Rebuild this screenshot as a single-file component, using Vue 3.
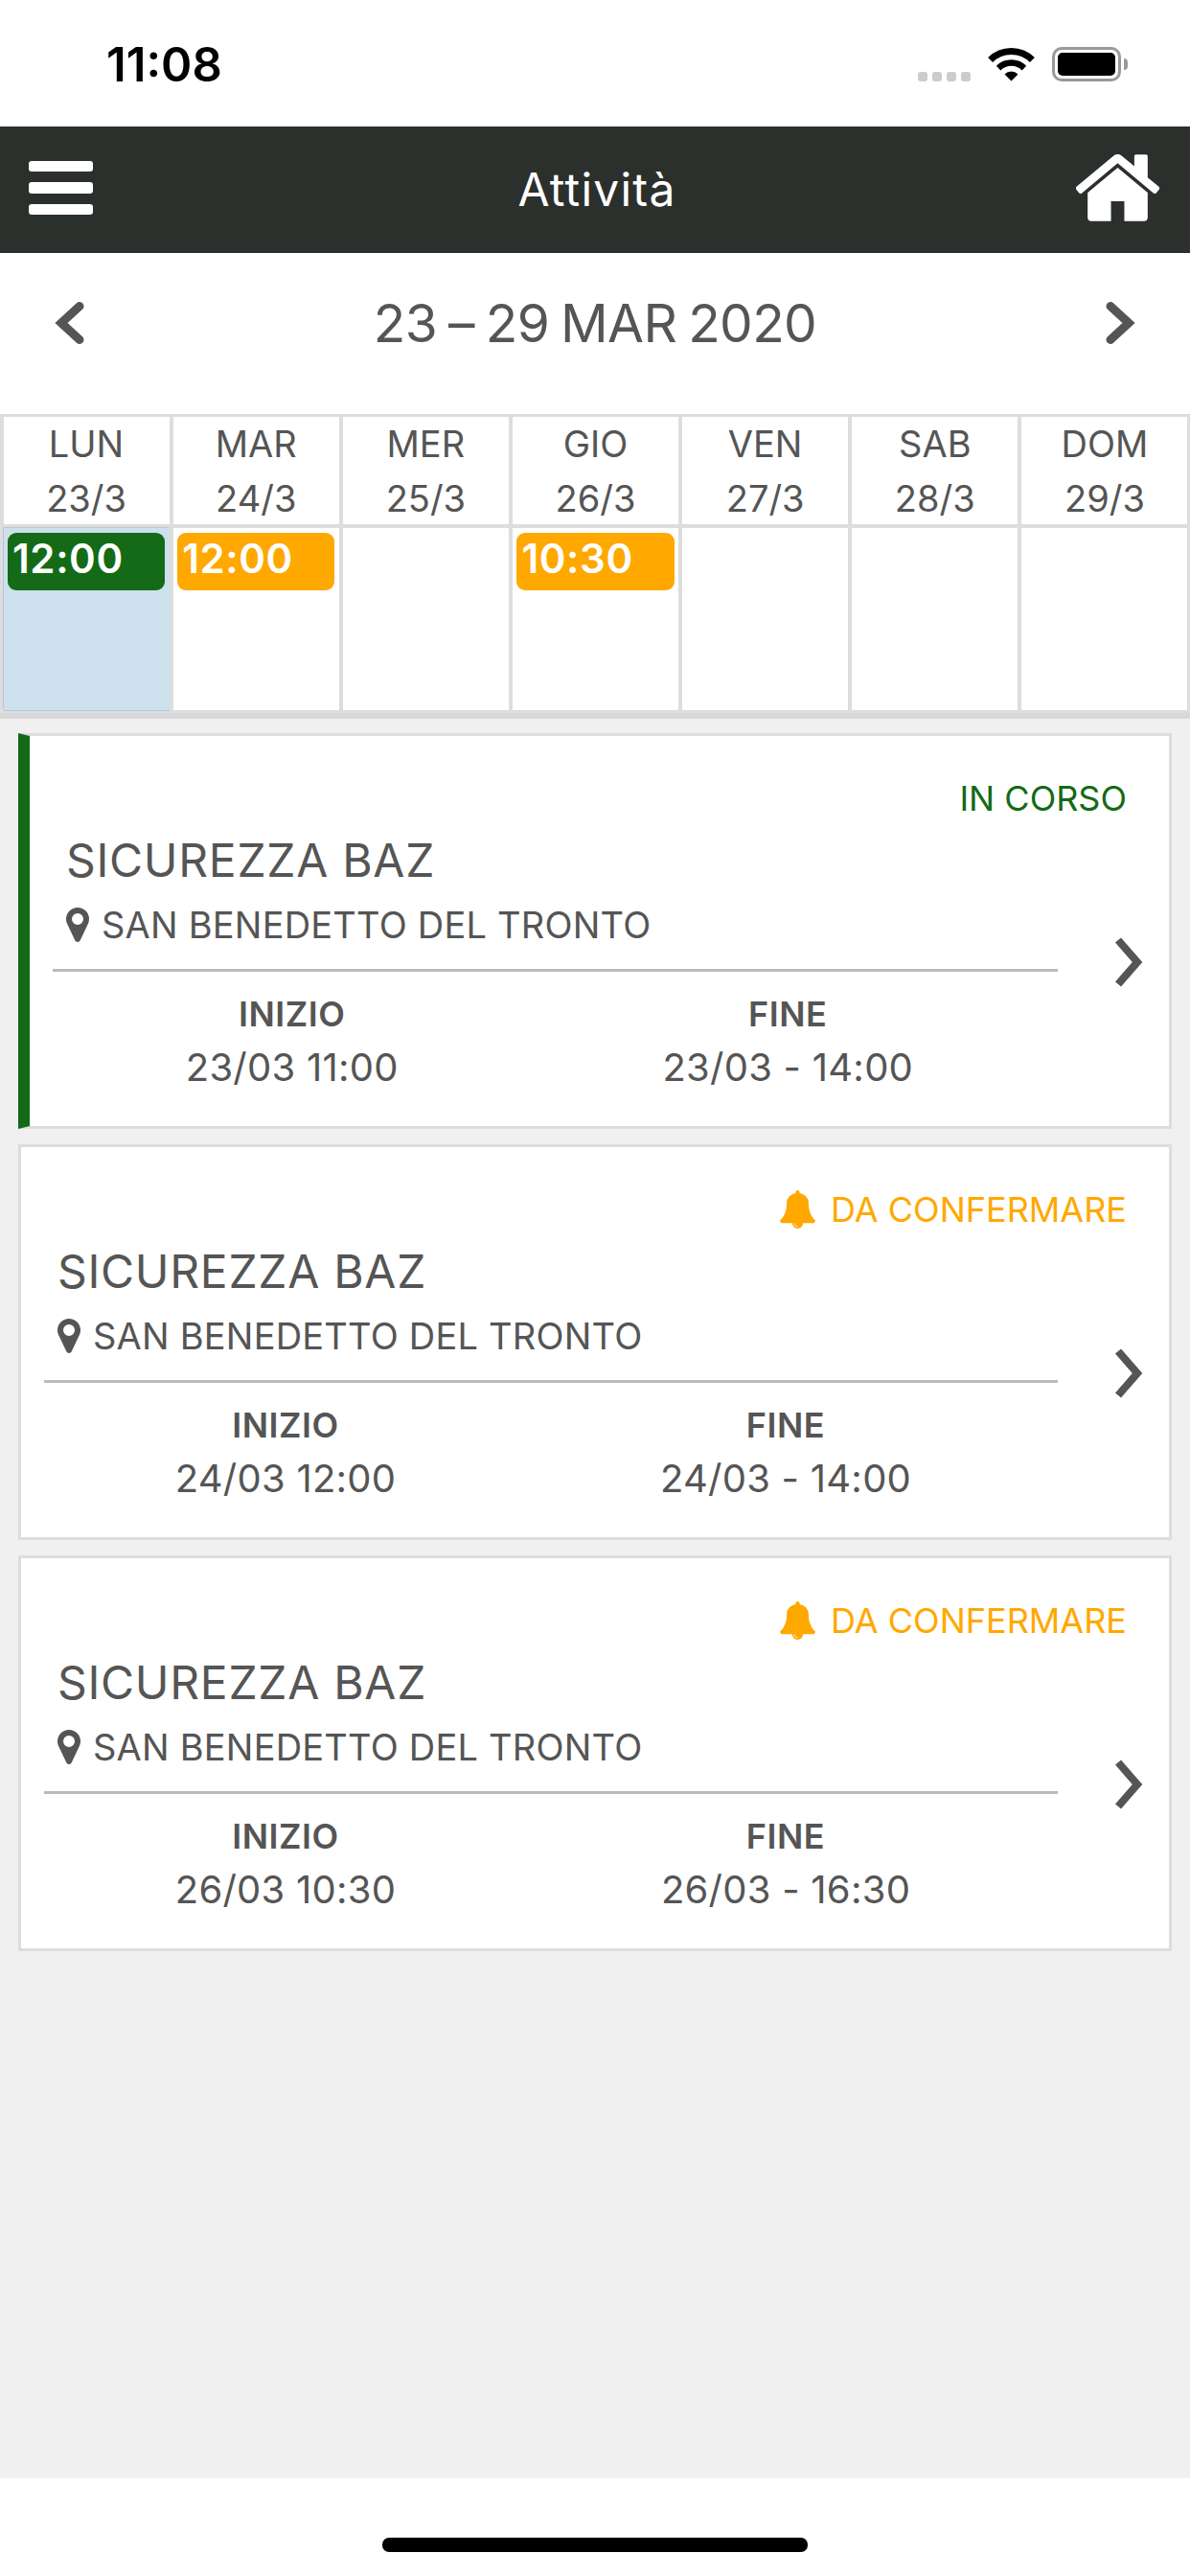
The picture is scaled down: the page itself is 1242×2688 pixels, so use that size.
<script setup>
const days = [
  { name: 'LUN', date: '23/3', time: '12:00', kind: 'active', today: true },
  { name: 'MAR', date: '24/3', time: '12:00', kind: 'pending' },
  { name: 'MER', date: '25/3' },
  { name: 'GIO', date: '26/3', time: '10:30', kind: 'pending' },
  { name: 'VEN', date: '27/3' },
  { name: 'SAB', date: '28/3' },
  { name: 'DOM', date: '29/3' }
];

const cards = [
  { status: 'IN CORSO', active: true, start: '23/03 11:00', end: '23/03 - 14:00' },
  { status: 'DA CONFERMARE', active: false, start: '24/03 12:00', end: '24/03 - 14:00' },
  { status: 'DA CONFERMARE', active: false, start: '26/03 10:30', end: '26/03 - 16:30' }
];
</script>

<template>
  <div class="screen">
    <div class="statusbar">
      <span class="clock">11:08</span>
      <div class="indicators">
        <div class="signal"><i></i><i></i><i></i><i></i></div>
        <svg class="wifi" viewBox="0 0 47 36" width="47" height="36">
          <path d="M1.6 13.6A31 31 0 0 1 45.4 13.6" fill="none" stroke="#000" stroke-width="7" />
          <path d="M10.1 22.1A19 19 0 0 1 36.9 22.1" fill="none" stroke="#000" stroke-width="6.5" />
          <path d="M23.5 35.5L16.5 28.4A10 10 0 0 1 30.5 28.4Z" fill="#000" />
        </svg>
        <div class="battery">
          <div class="battery-body"><div class="battery-level"></div></div>
          <div class="battery-cap"></div>
        </div>
      </div>
    </div>

    <header class="navbar">
      <div class="burger"><i></i><i></i><i></i></div>
      <h1 class="nav-title">Attività</h1>
      <svg class="home" viewBox="96 256 1600 1280" width="87" height="70">
        <path fill="#fff" d="M1472 992v480q0 26-19 45t-45 19h-384v-384h-256v384h-384q-26 0-45-19t-19-45v-480q0-1 .5-3t.5-3l575-474 575 474q1 2 1 6zm223-69l-62 74q-8 9-21 11h-3q-13 0-21-7l-692-577-692 577q-12 8-24 7-13-2-21-11l-62-74q-8-10-7-23.5t11-21.5l719-599q32-26 76-26t76 26l244 204v-195q0-14 9-23t23-9h192q14 0 23 9t9 23v408l219 182q10 8 11 21.5t-7 23.5z" />
      </svg>
    </header>

    <div class="week-nav">
      <svg viewBox="0 0 32 44" width="32" height="44">
        <polyline points="26,4.5 7,22 26,39.5" fill="none" stroke="#555" stroke-width="9" stroke-linecap="round" />
      </svg>
      <span class="week-label">23 – 29 MAR 2020</span>
      <svg viewBox="0 0 32 44" width="32" height="44">
        <polyline points="6,4.5 25,22 6,39.5" fill="none" stroke="#555" stroke-width="9" stroke-linecap="round" />
      </svg>
    </div>

    <div class="calendar">
      <div v-for="day in days" :key="day.name" class="day-head">
        <span>{{ day.name }}</span>
        <span>{{ day.date }}</span>
      </div>
      <div v-for="day in days" :key="day.date" class="day-cell" :class="{ today: day.today }">
        <div v-if="day.time" class="pill" :class="day.kind">{{ day.time }}</div>
      </div>
    </div>

    <main class="list">
      <article v-for="card in cards" :key="card.start" class="card" :class="{ 'card-active': card.active }">
        <div class="status" :class="card.active ? 'status-active' : 'status-pending'">
          <svg v-if="!card.active" class="bell" viewBox="64 0 1664 1792" width="37" height="40">
            <path fill="#ffa800" d="M912 1696q0-16-16-16-59 0-101.500-42.500t-42.500-101.500q0-16-16-16t-16 16q0 73 51.500 124.500t124.500 51.500q16 0 16-16zm816-288q0 52-38 90t-90 38h-448q0 106-75 181t-181 75-181-75-75-181h-448q-52 0-90-38t-38-90q50-42 91-88t85-119.500 74.500-158.500 50-206 19.500-260q0-152 117-282.500t307-158.500q-8-19-8-39 0-40 28-68t68-28 68 28 28 68q0 20-8 39 190 28 307 158.500t117 282.500q0 139 19.500 260t50 206 74.500 158.500 85 119.500 91 88z" />
          </svg>
          <span>{{ card.status }}</span>
        </div>
        <div class="card-body">
          <div class="card-main">
            <div class="card-head">
              <div class="card-title">SICUREZZA BAZ</div>
              <div class="card-place">
                <svg viewBox="384 128 1024 1536" width="24" height="36">
                  <path fill="#555" d="M1152 640q0-106-75-181t-181-75-181 75-75 181 75 181 181 75 181-75 75-181zm256 0q0 109-33 179l-364 774q-16 33-47.500 52t-67.500 19-67.500-19-47-52l-365-774q-33-70-33-179 0-212 150-362t362-150 362 150 150 362z" />
                </svg>
                <span>SAN BENEDETTO DEL TRONTO</span>
              </div>
            </div>
            <div class="divider"></div>
            <div class="times">
              <div class="time-col">
                <div class="time-label">INIZIO</div>
                <div class="time-value">{{ card.start }}</div>
              </div>
              <div class="time-col">
                <div class="time-label">FINE</div>
                <div class="time-value">{{ card.end }}</div>
              </div>
            </div>
          </div>
          <svg class="card-arrow" viewBox="0 0 30 52" width="30" height="52">
            <polyline points="4,3 24,26 4,49" fill="none" stroke="#555" stroke-width="8" />
          </svg>
        </div>
      </article>
    </main>

    <footer class="home-area"><div class="home-bar"></div></footer>
  </div>
</template>

<style scoped>
.screen {
  width: 1242px;
  height: 2688px;
  display: flex;
  flex-direction: column;
  background: #fff;
  color: #555;
  font-family: Inter, "Liberation Sans", sans-serif;
}

.statusbar {
  height: 132px;
  box-sizing: border-box;
  padding: 49px 65px 0 111px;
  display: flex;
  justify-content: space-between;
  align-items: flex-start;
}

.clock {
  font-size: 49px;
  font-weight: 600;
  line-height: 37px;
  color: #000;
}

.indicators {
  display: flex;
  align-items: flex-end;
  gap: 19px;
  height: 36px;
}

.signal {
  display: flex;
  gap: 5px;
}

.signal i {
  width: 10px;
  height: 10px;
  border-radius: 3px;
  background: #ccc;
}

.wifi {
  overflow: visible;
  display: block;
}

.battery {
  display: flex;
  align-items: center;
  height: 36px;
}

.battery-body {
  width: 72px;
  height: 36px;
  box-sizing: border-box;
  border: 3px solid #999;
  border-radius: 10px;
  padding: 3px;
}

.battery-level {
  height: 100%;
  border-radius: 5px;
  background: #000;
}

.battery-cap {
  width: 4px;
  height: 12px;
  margin-left: 3px;
  border-radius: 0 4px 4px 0;
  background: #999;
}

.navbar {
  height: 132px;
  box-sizing: border-box;
  padding: 0 32px 4px 30px;
  display: grid;
  grid-template-columns: 1fr auto 1fr;
  align-items: center;
  background: #2c302d;
}

.burger {
  display: flex;
  flex-direction: column;
  gap: 11px;
  width: 67px;
}

.burger i {
  height: 11.5px;
  border-radius: 3px;
  background: #fff;
}

.nav-title {
  margin: 0 0 0 6px;
  padding-top: 4px;
  font-size: 48px;
  font-weight: 400;
  line-height: 56px;
  letter-spacing: 1.2px;
  color: #fff;
}

.home {
  justify-self: end;
  display: block;
}

.week-nav {
  height: 168px;
  box-sizing: border-box;
  padding: 0 57px 22px;
  display: flex;
  justify-content: space-between;
  align-items: center;
}

.week-label {
  font-size: 55px;
  line-height: 62px;
  letter-spacing: -0.6px;
  word-spacing: -3px;
}

.calendar {
  display: grid;
  grid-template-columns: repeat(7, 1fr);
  grid-template-rows: 112px 190px;
  gap: 4px;
  padding: 3px 2.5px 3px 3.5px;
  border-bottom: 6px solid #d8d8d8;
  background: #ddd;
}

.day-head {
  display: flex;
  flex-direction: column;
  align-items: center;
  background: #fff;
  font-size: 38px;
  line-height: 57px;
}

.day-cell {
  box-sizing: border-box;
  padding: 5px 4.5px;
  background: #fff;
}

.day-cell.today {
  background: #cde0ee;
  box-shadow: -1px -1px 0 #b5c8d6, 0 1px 0 #b5c8d6;
}

.pill {
  height: 60px;
  box-sizing: border-box;
  padding-left: 5px;
  border-radius: 9px;
  font-size: 42px;
  font-weight: 600;
  line-height: 54px;
  letter-spacing: 0.6px;
  color: #fff;
}

.pill.active {
  background: #146a16;
}

.pill.pending {
  background: #ffa800;
}

.list {
  flex: 1;
  display: flex;
  flex-direction: column;
  gap: 16px;
  padding: 15px 19px 0;
  background: #f0f0f0;
}

.card {
  height: 413px;
  box-sizing: border-box;
  padding-top: 40px;
  border: 3px solid #ddd;
  background: #fff;
}

.card-active {
  border-left: 12px solid #146a16;
}

.status {
  height: 50px;
  padding-right: 44px;
  display: flex;
  justify-content: flex-end;
  align-items: center;
  gap: 16px;
  font-size: 36px;
  line-height: 50px;
}

.status-active {
  color: #146a16;
}

.status-pending {
  color: #ffa800;
}

.bell {
  display: block;
}

.card-body {
  margin-top: 12px;
  padding-left: 24px;
  display: flex;
  align-items: center;
}

.card-main {
  flex: 1;
  min-width: 0;
}

.card-head {
  padding-left: 14px;
}

.card-title {
  font-size: 48px;
  line-height: 56px;
  letter-spacing: 0.7px;
}

.card-place {
  margin-top: 16px;
  display: flex;
  align-items: center;
  gap: 13px;
  font-size: 38px;
  line-height: 46px;
  letter-spacing: 0.2px;
}

.divider {
  height: 3px;
  margin-top: 23px;
  background: #bbb;
}

.times {
  display: grid;
  grid-template-columns: 1fr 1fr;
  margin: 23px 23px 0 -9px;
  text-align: center;
}

.time-label {
  font-size: 36px;
  font-weight: 600;
  line-height: 42px;
  letter-spacing: 0.5px;
}

.time-value {
  margin-top: 12px;
  font-size: 40px;
  line-height: 46px;
  letter-spacing: 0.25px;
}

.card-arrow {
  flex: none;
  margin: 0 27px 0 59px;
  display: block;
}

.home-area {
  height: 102px;
  box-sizing: border-box;
  padding-top: 62px;
  display: flex;
  justify-content: center;
}

.home-bar {
  width: 444px;
  height: 15px;
  border-radius: 7px;
  background: #000;
}
</style>

<style>
html, body {
  margin: 0;
  background: #fff;
}
</style>
